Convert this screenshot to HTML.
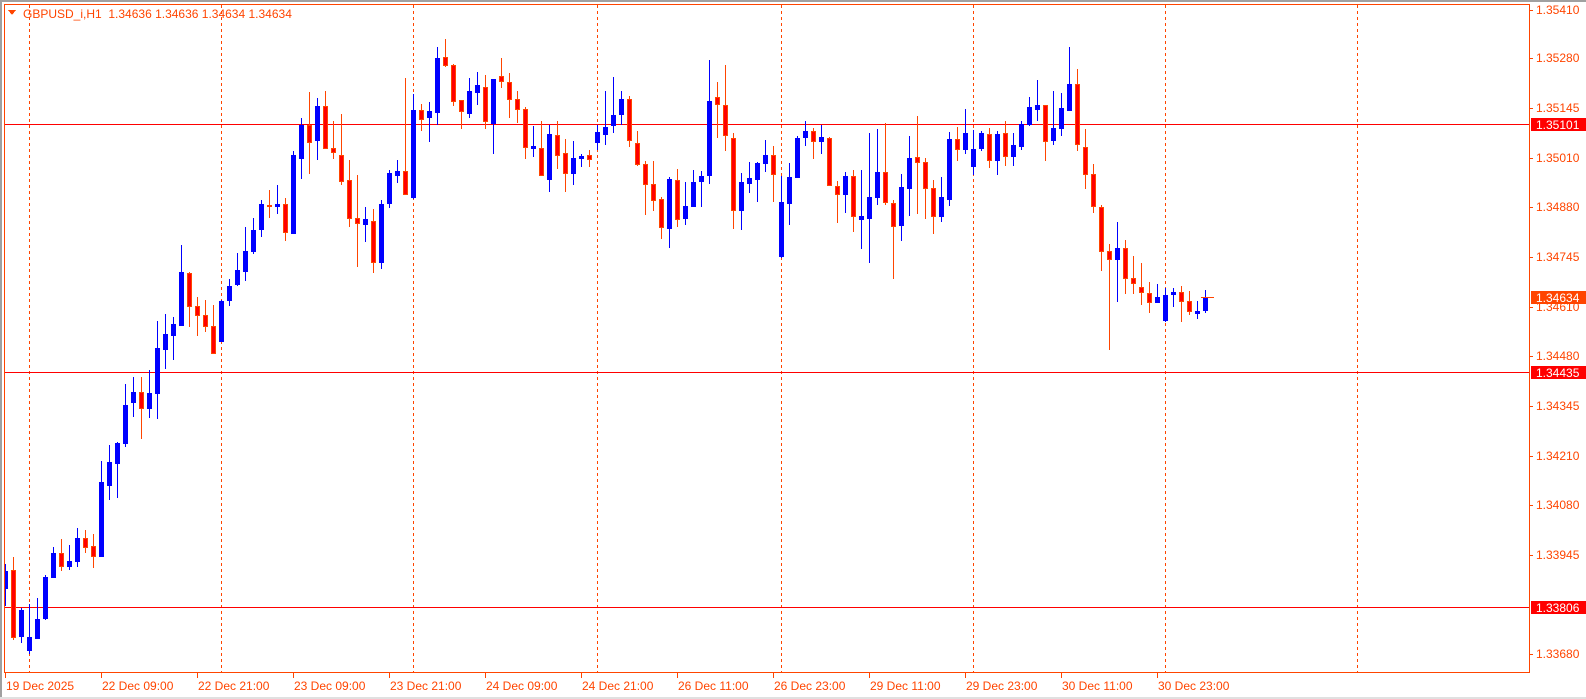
<!DOCTYPE html>
<html><head><meta charset="utf-8"><style>
html,body{margin:0;padding:0;background:#fff;}
svg{display:block;}
text{font-family:"Liberation Sans",sans-serif;font-size:12px;fill:#ff4500;}
</style></head><body>
<svg width="1586" height="699" viewBox="0 0 1586 699" xmlns="http://www.w3.org/2000/svg" shape-rendering="crispEdges">
<rect x="0" y="0" width="1586" height="699" fill="#fff"/>
<rect x="0" y="0" width="1586" height="2" fill="#a0a0a0"/>
<rect x="0" y="0" width="2" height="699" fill="#a0a0a0"/>
<rect x="0" y="697" width="1586" height="2" fill="#e0e0e0"/>
<defs><clipPath id="c"><rect x="5" y="5" width="1524" height="667"/></clipPath></defs>
<g stroke="#ff4500" stroke-width="1" stroke-dasharray="3,3">
<path d="M29.5 5V672M221.5 5V672M413.5 5V672M597.5 5V672M781.5 5V672M973.5 5V672M1165.5 5V672M1357.5 5V672"/>
</g>
<g stroke="#ff0000" stroke-width="1">
<path d="M5 124.5H1529M5 372.5H1529M5 607.5H1529"/>
</g>
<g clip-path="url(#c)">
<path stroke="#0000ff" stroke-width="1" fill="none" d="M5.5 564V606 M21.5 608V643 M29.5 604V654 M37.5 598V639 M45.5 575V620 M53.5 547V578 M69.5 545V570 M77.5 528V567 M101.5 461V557 M109.5 445V500 M117.5 442V498 M125.5 384V447 M133.5 377V417 M149.5 370V418 M157.5 321V419 M165.5 314V369 M173.5 317V360 M181.5 245V326 M221.5 300V342 M229.5 279V306 M237.5 253V286 M245.5 227V281 M253.5 218V254 M261.5 200V237 M277.5 185V214 M293.5 151V234 M301.5 118V179 M317.5 98V160 M365.5 207V242 M381.5 200V269 M389.5 170V208 M397.5 160V183 M413.5 94V199 M429.5 102V142 M437.5 47V125 M469.5 78V118 M477.5 72V105 M493.5 79V154 M533.5 126V157 M549.5 125V192 M573.5 141V185 M581.5 154V167 M597.5 125V150 M605.5 91V145 M613.5 77V133 M621.5 91V125 M669.5 177V248 M685.5 182V225 M693.5 170V207 M701.5 171V207 M709.5 60V184 M741.5 173V230 M749.5 162V193 M757.5 162V202 M765.5 140V172 M781.5 176V258 M789.5 163V225 M797.5 136V178 M805.5 121V146 M821.5 125V154 M845.5 172V213 M861.5 170V249 M869.5 133V263 M877.5 129V205 M901.5 174V241 M909.5 136V216 M941.5 177V222 M949.5 132V206 M965.5 109V154 M973.5 130V175 M981.5 131V151 M997.5 131V175 M1013.5 133V166 M1021.5 121V150 M1029.5 97V126 M1037.5 80V121 M1053.5 91V145 M1061.5 93V136 M1069.5 47V111 M1117.5 222V302 M1157.5 284V303 M1165.5 288V322 M1173.5 288V307 M1197.5 301V319 M1205.5 290V313"/>
<g fill="#0000ff">
<rect x="3" y="571" width="5" height="18"/><rect x="19" y="610" width="5" height="27"/><rect x="27" y="637" width="5" height="14"/><rect x="35" y="619" width="5" height="20"/><rect x="43" y="577" width="5" height="42"/><rect x="51" y="553" width="5" height="25"/><rect x="67" y="561" width="5" height="6"/><rect x="75" y="538" width="5" height="24"/><rect x="99" y="482" width="5" height="75"/><rect x="107" y="462" width="5" height="24"/><rect x="115" y="443" width="5" height="21"/><rect x="123" y="405" width="5" height="39"/><rect x="131" y="392" width="5" height="11"/><rect x="147" y="393" width="5" height="16"/><rect x="155" y="348" width="5" height="46"/><rect x="163" y="334" width="5" height="16"/><rect x="171" y="324" width="5" height="12"/><rect x="179" y="272" width="5" height="54"/><rect x="219" y="301" width="5" height="41"/><rect x="227" y="286" width="5" height="15"/><rect x="235" y="270" width="5" height="15"/><rect x="243" y="251" width="5" height="21"/><rect x="251" y="230" width="5" height="22"/><rect x="259" y="204" width="5" height="26"/><rect x="275" y="204" width="5" height="3"/><rect x="291" y="155" width="5" height="79"/><rect x="299" y="125" width="5" height="34"/><rect x="315" y="106" width="5" height="35"/><rect x="363" y="219" width="5" height="6"/><rect x="379" y="204" width="5" height="59"/><rect x="387" y="173" width="5" height="31"/><rect x="395" y="171" width="5" height="5"/><rect x="411" y="110" width="5" height="88"/><rect x="427" y="111" width="5" height="7"/><rect x="435" y="58" width="5" height="55"/><rect x="467" y="91" width="5" height="23"/><rect x="475" y="85" width="5" height="8"/><rect x="491" y="79" width="5" height="45"/><rect x="531" y="146" width="5" height="3"/><rect x="547" y="134" width="5" height="46"/><rect x="571" y="158" width="5" height="16"/><rect x="579" y="156" width="5" height="3"/><rect x="595" y="132" width="5" height="11"/><rect x="603" y="127" width="5" height="8"/><rect x="611" y="115" width="5" height="11"/><rect x="619" y="99" width="5" height="16"/><rect x="667" y="179" width="5" height="50"/><rect x="683" y="206" width="5" height="13"/><rect x="691" y="182" width="5" height="25"/><rect x="699" y="176" width="5" height="6"/><rect x="707" y="101" width="5" height="75"/><rect x="739" y="182" width="5" height="29"/><rect x="747" y="178" width="5" height="6"/><rect x="755" y="163" width="5" height="17"/><rect x="763" y="155" width="5" height="9"/><rect x="779" y="202" width="5" height="55"/><rect x="787" y="177" width="5" height="27"/><rect x="795" y="138" width="5" height="40"/><rect x="803" y="131" width="5" height="7"/><rect x="819" y="137" width="5" height="5"/><rect x="843" y="176" width="5" height="19"/><rect x="859" y="216" width="5" height="4"/><rect x="867" y="197" width="5" height="22"/><rect x="875" y="172" width="5" height="26"/><rect x="899" y="187" width="5" height="39"/><rect x="907" y="158" width="5" height="31"/><rect x="939" y="197" width="5" height="20"/><rect x="947" y="139" width="5" height="61"/><rect x="963" y="133" width="5" height="17"/><rect x="971" y="149" width="5" height="18"/><rect x="979" y="133" width="5" height="16"/><rect x="995" y="134" width="5" height="27"/><rect x="1011" y="145" width="5" height="12"/><rect x="1019" y="124" width="5" height="23"/><rect x="1027" y="107" width="5" height="18"/><rect x="1035" y="105" width="5" height="5"/><rect x="1051" y="128" width="5" height="13"/><rect x="1059" y="108" width="5" height="21"/><rect x="1067" y="84" width="5" height="27"/><rect x="1115" y="248" width="5" height="12"/><rect x="1155" y="297" width="5" height="6"/><rect x="1163" y="295" width="5" height="26"/><rect x="1171" y="292" width="5" height="3"/><rect x="1195" y="311" width="5" height="3"/><rect x="1203" y="297" width="5" height="14"/>
</g>
<path stroke="#ff4500" stroke-width="1" fill="none" d="M13.5 557V640 M61.5 539V571 M85.5 530V553 M93.5 534V568 M141.5 377V439 M189.5 272V327 M197.5 297V336 M205.5 300V332 M213.5 305V354 M269.5 190V218 M285.5 198V241 M309.5 92V174 M325.5 91V149 M333.5 121V159 M341.5 114V185 M349.5 160V227 M357.5 175V267 M373.5 209V273 M405.5 78V195 M421.5 104V131 M445.5 39V67 M453.5 64V106 M461.5 100V129 M485.5 75V129 M501.5 58V88 M509.5 73V118 M517.5 91V123 M525.5 107V159 M541.5 121V176 M557.5 121V169 M565.5 139V192 M589.5 150V167 M629.5 96V147 M637.5 131V166 M645.5 161V215 M653.5 161V211 M661.5 197V239 M677.5 169V227 M717.5 82V138 M725.5 65V151 M733.5 133V229 M773.5 146V202 M813.5 128V159 M829.5 137V186 M837.5 181V223 M853.5 170V232 M885.5 123V205 M893.5 200V279 M917.5 116V214 M925.5 158V219 M933.5 180V234 M957.5 127V161 M989.5 128V168 M1005.5 121V166 M1045.5 105V161 M1077.5 69V151 M1085.5 129V189 M1093.5 164V213 M1101.5 205V271 M1109.5 244V350 M1125.5 240V294 M1133.5 256V294 M1141.5 263V305 M1149.5 282V313 M1181.5 286V322 M1189.5 291V315"/>
<g fill="#ff0000" stroke="#ff4500" stroke-width="1">
<rect x="11.5" y="570.5" width="4" height="67"/><rect x="59.5" y="553.5" width="4" height="13"/><rect x="83.5" y="538.5" width="4" height="9"/><rect x="91.5" y="546.5" width="4" height="10"/><rect x="139.5" y="392.5" width="4" height="16"/><rect x="187.5" y="273.5" width="4" height="33"/><rect x="195.5" y="306.5" width="4" height="9"/><rect x="203.5" y="315.5" width="4" height="11"/><rect x="211.5" y="326.5" width="4" height="27"/><rect x="267.5" y="205.5" width="4" height="1"/><rect x="283.5" y="204.5" width="4" height="28"/><rect x="307.5" y="125.5" width="4" height="17"/><rect x="323.5" y="106.5" width="4" height="42"/><rect x="331.5" y="148.5" width="4" height="4"/><rect x="339.5" y="155.5" width="4" height="26"/><rect x="347.5" y="180.5" width="4" height="38"/><rect x="355.5" y="218.5" width="4" height="5"/><rect x="371.5" y="221.5" width="4" height="41"/><rect x="403.5" y="171.5" width="4" height="23"/><rect x="419.5" y="110.5" width="4" height="9"/><rect x="443.5" y="57.5" width="4" height="8"/><rect x="451.5" y="65.5" width="4" height="36"/><rect x="459.5" y="100.5" width="4" height="11"/><rect x="483.5" y="87.5" width="4" height="34"/><rect x="499.5" y="76.5" width="4" height="5"/><rect x="507.5" y="82.5" width="4" height="17"/><rect x="515.5" y="99.5" width="4" height="10"/><rect x="523.5" y="109.5" width="4" height="38"/><rect x="539.5" y="148.5" width="4" height="27"/><rect x="555.5" y="135.5" width="4" height="20"/><rect x="563.5" y="153.5" width="4" height="20"/><rect x="587.5" y="155.5" width="4" height="4"/><rect x="627.5" y="99.5" width="4" height="41"/><rect x="635.5" y="143.5" width="4" height="21"/><rect x="643.5" y="164.5" width="4" height="20"/><rect x="651.5" y="184.5" width="4" height="16"/><rect x="659.5" y="199.5" width="4" height="28"/><rect x="675.5" y="180.5" width="4" height="39"/><rect x="715.5" y="97.5" width="4" height="7"/><rect x="723.5" y="105.5" width="4" height="30"/><rect x="731.5" y="138.5" width="4" height="72"/><rect x="771.5" y="155.5" width="4" height="19"/><rect x="811.5" y="131.5" width="4" height="10"/><rect x="827.5" y="138.5" width="4" height="47"/><rect x="835.5" y="186.5" width="4" height="8"/><rect x="851.5" y="176.5" width="4" height="40"/><rect x="883.5" y="172.5" width="4" height="30"/><rect x="891.5" y="203.5" width="4" height="23"/><rect x="915.5" y="157.5" width="4" height="5"/><rect x="923.5" y="162.5" width="4" height="26"/><rect x="931.5" y="188.5" width="4" height="28"/><rect x="955.5" y="139.5" width="4" height="10"/><rect x="987.5" y="134.5" width="4" height="26"/><rect x="1003.5" y="133.5" width="4" height="23"/><rect x="1043.5" y="105.5" width="4" height="36"/><rect x="1075.5" y="84.5" width="4" height="60"/><rect x="1083.5" y="147.5" width="4" height="27"/><rect x="1091.5" y="174.5" width="4" height="32"/><rect x="1099.5" y="207.5" width="4" height="44"/><rect x="1107.5" y="251.5" width="4" height="8"/><rect x="1123.5" y="248.5" width="4" height="30"/><rect x="1131.5" y="278.5" width="4" height="5"/><rect x="1139.5" y="287.5" width="4" height="5"/><rect x="1147.5" y="293.5" width="4" height="9"/><rect x="1179.5" y="292.5" width="4" height="9"/><rect x="1187.5" y="301.5" width="4" height="10"/>
</g>
<path stroke="#ff4500" d="M1201 297.5H1214"/>
</g>
<rect x="4.5" y="4.5" width="1525" height="668" fill="none" stroke="#ff4500" stroke-width="1"/>
<path d="M8 10H16L12 15Z" fill="#ff4500"/>
<text x="23" y="18" xml:space="preserve" style="white-space:pre">GBPUSD_i,H1  1.34636 1.34636 1.34634 1.34634</text>
<g stroke="#ff4500"><path d="M1530 10.5H1533M1530 58.5H1533M1530 108.5H1533M1530 158.5H1533M1530 207.5H1533M1530 257.5H1533M1530 307.5H1533M1530 356.5H1533M1530 406.5H1533M1530 456.5H1533M1530 505.5H1533M1530 555.5H1533M1530 654.5H1533"/></g>
<g>
<text x="1536" y="14">1.35410</text>
<text x="1536" y="62">1.35280</text>
<text x="1536" y="112">1.35145</text>
<text x="1536" y="162">1.35010</text>
<text x="1536" y="211">1.34880</text>
<text x="1536" y="261">1.34745</text>
<text x="1536" y="311">1.34610</text>
<text x="1536" y="360">1.34480</text>
<text x="1536" y="410">1.34345</text>
<text x="1536" y="460">1.34210</text>
<text x="1536" y="509">1.34080</text>
<text x="1536" y="559">1.33945</text>
<text x="1536" y="658">1.33680</text>
</g>
<rect x="1531" y="118" width="55" height="13" fill="#ff0000"/>
<text x="1536" y="129" style="fill:#fff">1.35101</text>
<rect x="1531" y="291" width="55" height="13" fill="#ff4500"/>
<text x="1536" y="302" style="fill:#fff">1.34634</text>
<rect x="1531" y="366" width="55" height="13" fill="#ff0000"/>
<text x="1536" y="377" style="fill:#fff">1.34435</text>
<rect x="1531" y="601" width="55" height="13" fill="#ff0000"/>
<text x="1536" y="612" style="fill:#fff">1.33806</text>
<g stroke="#ff4500"><path d="M5.5 673V678M101.5 673V678M197.5 673V678M293.5 673V678M389.5 673V678M485.5 673V678M581.5 673V678M677.5 673V678M773.5 673V678M869.5 673V678M965.5 673V678M1061.5 673V678M1157.5 673V678"/></g>
<g>
<text x="6" y="690">19 Dec 2025</text>
<text x="102" y="690">22 Dec 09:00</text>
<text x="198" y="690">22 Dec 21:00</text>
<text x="294" y="690">23 Dec 09:00</text>
<text x="390" y="690">23 Dec 21:00</text>
<text x="486" y="690">24 Dec 09:00</text>
<text x="582" y="690">24 Dec 21:00</text>
<text x="678" y="690">26 Dec 11:00</text>
<text x="774" y="690">26 Dec 23:00</text>
<text x="870" y="690">29 Dec 11:00</text>
<text x="966" y="690">29 Dec 23:00</text>
<text x="1062" y="690">30 Dec 11:00</text>
<text x="1158" y="690">30 Dec 23:00</text>
</g>
</svg>
</body></html>
